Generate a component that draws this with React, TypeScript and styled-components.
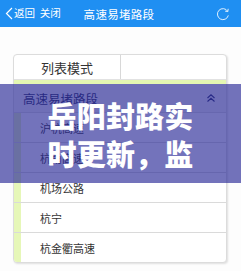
import React from "react";
import styled, { createGlobalStyle } from "styled-components";

const Global = createGlobalStyle`
  html, body { margin: 0; padding: 0; background: #fdfdfd; }
  body { width: 241px; height: 271px; overflow: hidden; font-family: "Noto Sans CJK SC", "Noto Sans", sans-serif; }
`;

const Screen = styled.div`
  position: relative;
  width: 241px;
  height: 271px;
  background: #fdfdfd;
  overflow: hidden;
`;

const Header = styled.div`
  height: 27px;
  background: #1f8ff2;
  display: grid;
  grid-template-columns: 1fr auto 1fr;
  align-items: center;
  padding: 0 8px 0 5px;
  color: #fff;
`;

const Back = styled.div`
  display: flex;
  align-items: center;
  gap: 1px;
  font-size: 10.5px;
  line-height: 1;
`;

const HeaderTitle = styled.div`
  font-size: 11.5px;
  letter-spacing: 0.3px;
`;

const HeaderRight = styled.div`
  display: flex;
  justify-content: flex-end;
  padding-right: 3px;
`;

const Content = styled.div`
  padding: 27px 14px 0 13px;
`;

const Card = styled.div`
  border: 1px solid #dcdcdc;
  border-radius: 4px;
  background: #fff;
  box-shadow: 1px 1px 2px rgba(0, 0, 0, 0.12);
  overflow: hidden;
`;

const Tabs = styled.div`
  display: grid;
  grid-template-columns: 107px 1fr;
  height: 24px;
  border-bottom: 1px solid #e2e2e2;
`;

const Tab = styled.div<{ $divider?: boolean }>`
  display: flex;
  align-items: center;
  justify-content: center;
  font-size: 13px;
  color: #333;
  border-right: ${(p) => (p.$divider ? "1px solid #d8d8d8" : "none")};
`;

const GreenBar = styled.div`
  height: 4px;
  background: #e4f7b2;
`;

const SectionHead = styled.div`
  height: 28px;
  display: flex;
  align-items: center;
  justify-content: space-between;
  padding: 0 10px 0 9px;
  background: #f2f2f4;
  border-bottom: 1px solid #dcdcdc;
  font-size: 12.5px;
  color: #2a2f5a;
`;

const Row = styled.div`
  height: 29px;
  display: flex;
  border-bottom: 1px solid #dadada;
  &:last-child { border-bottom: none; }
`;

const Stripe = styled.div`
  width: 7px;
  background: #e6f7b8;
`;

const RowText = styled.div`
  display: flex;
  align-items: center;
  padding-left: 19px;
  font-size: 11px;
  color: #333;
`;

const Overlay = styled.div`
  position: absolute;
  left: 0;
  top: 84px;
  width: 241px;
  height: 99px;
  background: rgba(40, 40, 150, 0.65);
  display: flex;
  align-items: center;
  justify-content: center;
`;

const Title = styled.div`
  width: 150px;
  margin-left: 4px;
  color: #fff;
  font-family: "Noto Sans CJK SC", sans-serif;
  font-weight: 900;
  font-size: 29px;
  line-height: 38px;
  letter-spacing: 0.2px;
`;

const roads = ["沪杭高速", "杭甬高速", "机场公路", "杭宁", "杭金衢高速"];

export default function App() {
  return (
    <Screen>
      <Global />
      <Header>
        <Back>
          <svg width="8" height="13" viewBox="0 0 8 13">
            <path d="M7 1 L1.5 6.5 L7 12" fill="none" stroke="#fff" strokeWidth="1.2" />
          </svg>
          <span>返回&nbsp;&nbsp;关闭</span>
        </Back>
        <HeaderTitle>高速易堵路段</HeaderTitle>
        <HeaderRight>
          <svg width="14" height="14" viewBox="0 0 14 14">
            <path d="M11.6 4.2 A5.5 5.5 0 1 0 12.3 8.4" fill="none" stroke="rgba(255,255,255,0.85)" strokeWidth="1" />
            <path d="M12.2 1.8 L11.8 4.6 L9.1 4.1" fill="none" stroke="rgba(255,255,255,0.85)" strokeWidth="1" />
          </svg>
        </HeaderRight>
      </Header>
      <Content>
        <Card>
          <Tabs>
            <Tab $divider>列表模式</Tab>
            <Tab />
          </Tabs>
          <GreenBar />
          <SectionHead>
            <span>高速易堵路段</span>
            <svg width="10" height="10" viewBox="0 0 10 10">
              <path d="M1.5 5 L5 1.8 L8.5 5 M1.5 8.5 L5 5.3 L8.5 8.5" fill="none" stroke="#2a2f6a" strokeWidth="1.1" />
            </svg>
          </SectionHead>
          {roads.map((r) => (
            <Row key={r}>
              <Stripe />
              <RowText>{r}</RowText>
            </Row>
          ))}
        </Card>
      </Content>
      <Overlay>
        <Title>岳阳封路实时更新，监</Title>
      </Overlay>
    </Screen>
  );
}
